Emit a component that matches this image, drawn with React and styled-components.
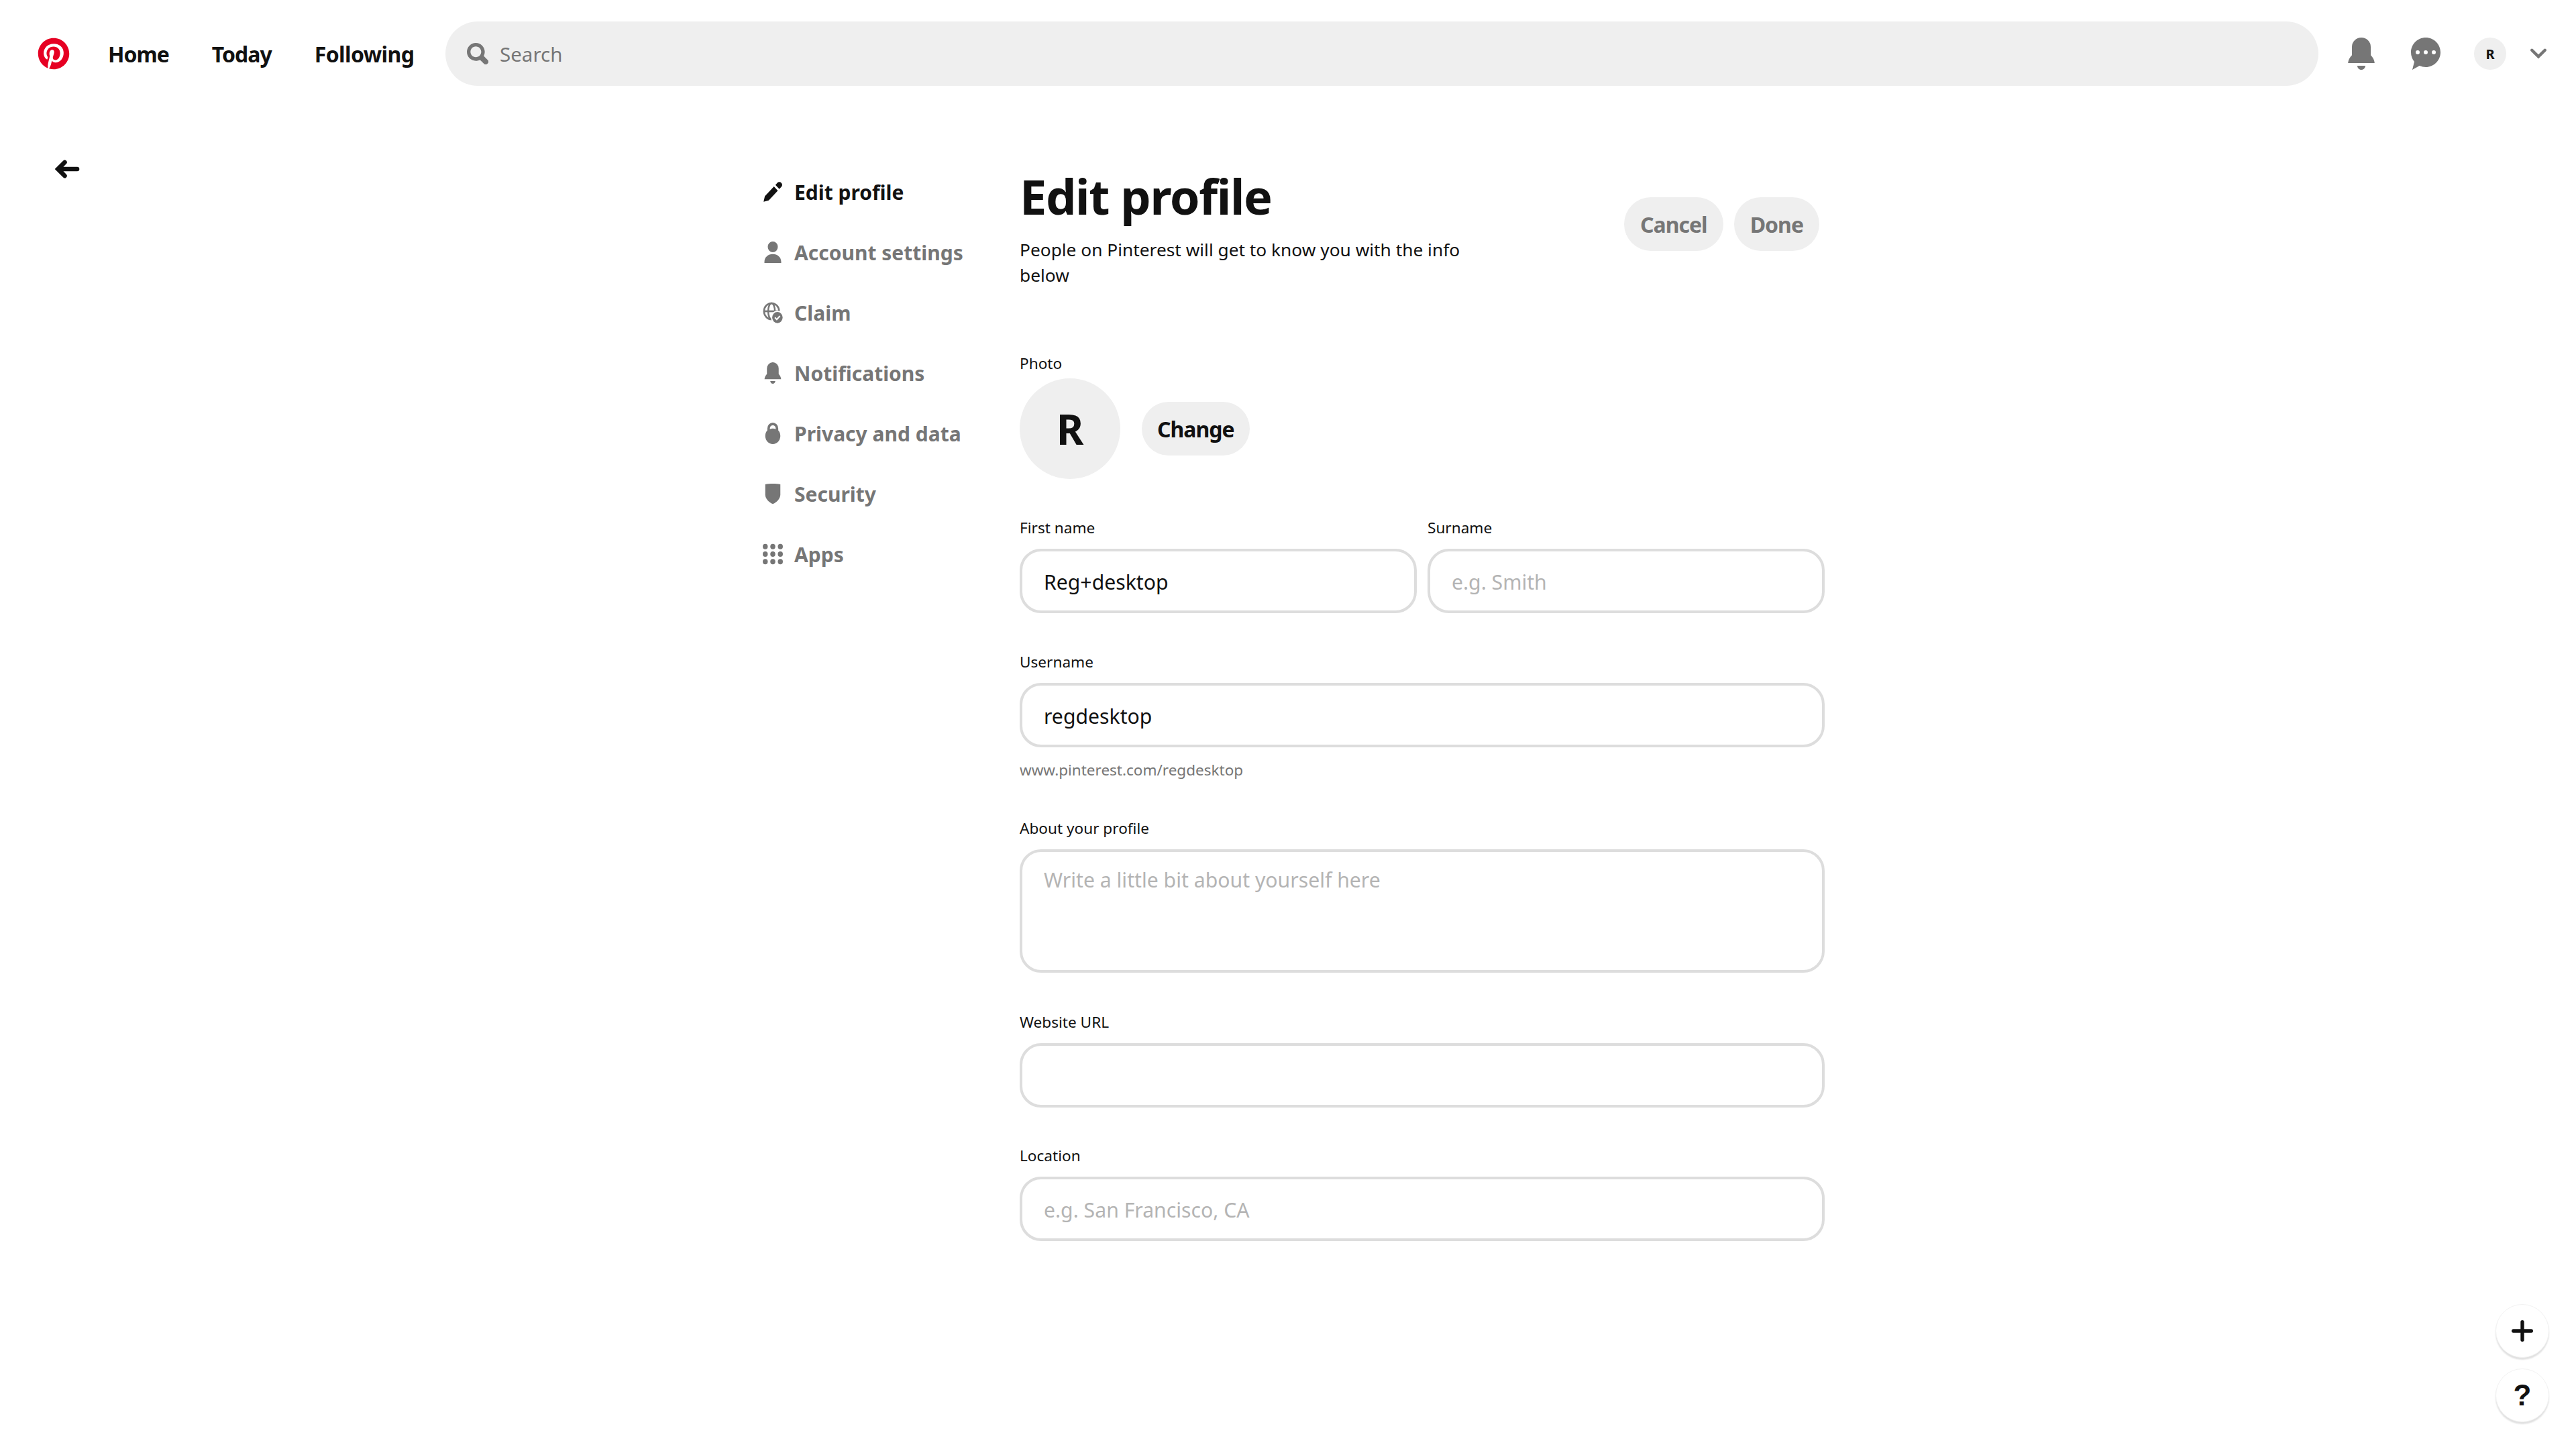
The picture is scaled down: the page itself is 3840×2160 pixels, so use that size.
import React from "react";
import styled, { createGlobalStyle } from "styled-components";
import { FaPinterest } from "react-icons/fa";

const Global = createGlobalStyle`
  html, body { margin: 0; padding: 0; background: #fff; }
  * { box-sizing: border-box; }
  body { font-family: "Noto Sans", "Open Sans", "Liberation Sans", sans-serif; color: #111; }
`;

const Page = styled.div`
  position: relative;
  width: 3840px;
  height: 2160px;
  overflow: hidden;
  background: #fff;
`;
const Header = styled.header`
  height: 160px;
  padding: 32px 44px 32px 56px;
  display: flex;
  align-items: center;
`;
const Logo = styled.span`
  display: flex;
  color: #e60023;
  margin-right: 57px;
  font-size: 48px;
`;
const Nav = styled.nav`
  width: 503px;
  flex: none;
  display: flex;
  align-items: center;
`;
const NavLink = styled.a`
  font-size: 32px;
  font-weight: 700;
  color: #111;
  margin-right: ${(p) => p.$gap}px;
  letter-spacing: ${(p) => p.$ls ?? -1}px;
  white-space: nowrap;
`;
const SearchBar = styled.div`
  width: 2792px;
  flex: none;
  height: 96px;
  border-radius: 48px;
  background: #efefef;
  display: flex;
  align-items: center;
  padding-left: 32px;
  gap: 17px;
  color: #767676;
  font-size: 29.5px;
`;
const TopIcons = styled.div`
  display: flex;
  align-items: center;
  margin-left: 40px;
`;
const TopIcon = styled.svg`
  display: block;
  fill: ${(p) => p.$color || "#767676"};
  margin-right: ${(p) => p.$mr || 0}px;
`;
const MiniAvatar = styled.div`
  width: 48px;
  height: 48px;
  border-radius: 50%;
  background: #efefef;
  font-size: 20px;
  font-weight: 700;
  display: flex;
  align-items: center;
  justify-content: center;
  margin-right: 36px;
`;
const Main = styled.main`
  display: grid;
  grid-template-columns: 1137px 383px 1200px;
`;
const BackCol = styled.div`
  padding: 72px 0 0 80px;
`;
const SideNav = styled.nav`
  padding-top: 81px;
  display: flex;
  flex-direction: column;
`;
const SideItem = styled.a`
  height: 90px;
  display: flex;
  align-items: center;
  gap: 17px;
  font-size: 30px;
  font-weight: 700;
  color: ${(p) => (p.$active ? "#111" : "#767676")};
  white-space: nowrap;
`;
const SideSvg = styled.svg`
  width: 30px;
  height: 32px;
  flex: none;
  fill: currentColor;
`;
const Form = styled.section`
  display: flex;
  flex-direction: column;
`;
const TitleRow = styled.div`
  display: flex;
  justify-content: space-between;
  height: 254px;
  padding-top: 88px;
  padding-right: 8px;
`;
const TitleBlock = styled.div`
  width: 700px;
`;
const Title = styled.h1`
  margin: 0 0 17px;
  font-size: 72px;
  line-height: 88px;
  font-weight: 700;
  letter-spacing: -1.4px;
  color: #111;
`;
const Subtitle = styled.p`
  margin: 0;
  font-size: 26.3px;
  line-height: 38px;
  color: #111;
`;
const Actions = styled.div`
  display: flex;
  gap: 16px;
  padding-top: 46px;
`;
const Pill = styled.button`
  height: 80px;
  padding: 0 ${(p) => p.$pad || 24}px;
  border: none;
  border-radius: 40px;
  background: #efefef;
  font: 700 32px "Noto Sans", sans-serif;
  letter-spacing: -1px;
  color: ${(p) => (p.$muted ? "#767676" : "#111")};
`;
const Label = styled.label`
  display: block;
  font-size: 22.6px;
  line-height: 30px;
  color: #111;
  margin-bottom: ${(p) => p.$mb ?? 16}px;
`;
const PhotoBlock = styled.div`
  margin-top: 113px;
  margin-bottom: 58px;
`;
const PhotoRow = styled.div`
  display: flex;
  align-items: center;
  gap: 32px;
`;
const BigAvatar = styled.div`
  width: 150px;
  height: 150px;
  border-radius: 50%;
  background: #efefef;
  display: flex;
  align-items: center;
  justify-content: center;
  font-size: 62px;
  font-weight: 700;
`;
const NameRow = styled.div`
  display: grid;
  grid-template-columns: 592px 592px;
  gap: 16px;
`;
const Field = styled.div`
  margin-bottom: ${(p) => p.$mb ?? 58}px;
`;
const Input = styled.input`
  display: block;
  width: 100%;
  height: 96px;
  border: 4px solid #ddd;
  border-radius: 32px;
  padding: 2px 32px 0;
  font: 400 30.2px "Noto Sans", sans-serif;
  color: #111;
  background: #fff;
  outline: none;
  &::placeholder { color: #b4b4b4; opacity: 1; }
`;
const TextArea = styled.textarea`
  display: block;
  width: 100%;
  height: 184px;
  border: 4px solid #ddd;
  border-radius: 32px;
  padding: 21px 32px;
  font: 400 30.2px "Noto Sans", sans-serif;
  resize: none;
  outline: none;
  &::placeholder { color: #b4b4b4; opacity: 1; }
`;
const Hint = styled.div`
  font-size: 22.5px;
  line-height: 32px;
  color: #767676;
  margin-top: 18px;
`;
const Fab = styled.button`
  position: absolute;
  right: 40px;
  bottom: ${(p) => p.$bottom}px;
  width: 80px;
  height: 80px;
  border: 1px solid #f2f2f2;
  border-radius: 50%;
  background: #fff;
  box-shadow: 0 3px 2px rgba(0, 0, 0, 0.12);
  display: flex;
  align-items: center;
  justify-content: center;
  padding: 0;
  color: #111;
  font: 900 44px "Liberation Sans", sans-serif;
`;

const icons = {
  pencil: <path d="M13.386 6.018l4.596 4.596L7.097 21.499 1 23l1.501-6.097L13.386 6.018zm8.662-4.066a3.248 3.248 0 0 1 0 4.596L19.75 8.848 15.154 4.25l2.298-2.299a3.248 3.248 0 0 1 4.596 0z" />,
  person: <path d="M12 12a6 6 0 1 0 0-12 6 6 0 0 0 0 12zm0 2c-5.500 0-10 3.400-10 8.600V24h20v-1.400C22 17.400 17.500 14 12 14z" />,
  claim: (
    <g>
      <circle cx="10.5" cy="10.5" r="9" fill="none" stroke="currentColor" strokeWidth="2" />
      <ellipse cx="10.5" cy="10.5" rx="4" ry="9" fill="none" stroke="currentColor" strokeWidth="2" />
      <path d="M1.5 10.5h18" fill="none" stroke="currentColor" strokeWidth="2" />
      <circle cx="17.5" cy="17.5" r="7" stroke="#fff" strokeWidth="1.5" />
      <path d="M14.5 17.5l2.2 2.2 3.8-4" fill="none" stroke="#fff" strokeWidth="1.6" />
    </g>
  ),
  bell: <path d="M12 24c-1.660 0-3-1.340-3-3h6c0 1.660-1.340 3-3 3zm7-10.830c1.580 1.520 2.670 3.550 2.920 5.830H2.080C2.330 16.720 3.420 14.690 5 13.170V7a7 7 0 0 1 7-7 7 7 0 0 1 7 7v6.170z" />,
  lock: <path fillRule="evenodd" d="M12 0a6.500 6.500 0 0 1 6.500 6.500v2.200A9 9 0 1 1 5.500 8.700V6.500A6.500 6.500 0 0 1 12 0zm0 3a3.500 3.500 0 0 0-3.500 3.500v.8a9 9 0 0 1 7 0v-.8A3.500 3.500 0 0 0 12 3z" />,
  shield: <path d="M3 1.500C8 .5 16 .5 21 1.500V13c0 4.500-4 8.500-9 10.500C7 21.500 3 17.500 3 13z" />,
  apps: (
    <g>
      {[3, 12, 21].flatMap((x) =>
        [3.5, 12, 20.5].map((y) => <circle key={`${x}-${y}`} cx={x} cy={y} r="3" />)
      )}
    </g>
  ),
};

const navItems = [
  ["pencil", "Edit profile", true],
  ["person", "Account settings"],
  ["claim", "Claim"],
  ["bell", "Notifications"],
  ["lock", "Privacy and data"],
  ["shield", "Security"],
  ["apps", "Apps"],
];

export default function App() {
  return (
    <Page>
      <Global />
      <Header>
        <Logo><FaPinterest /></Logo>
        <Nav>
          <NavLink $gap={64}>Home</NavLink>
          <NavLink $gap={64}>Today</NavLink>
          <NavLink $gap={0} $ls={-0.6}>Following</NavLink>
        </Nav>
        <SearchBar>
          <TopIcon width="32" height="32" viewBox="0 0 24 24">
            <path d="M10 16c-3.310 0-6-2.690-6-6s2.690-6 6-6 6 2.690 6 6-2.690 6-6 6m13.120 2.880l-4.260-4.260A9.842 9.842 0 0 0 20 10c0-5.520-4.480-10-10-10S0 4.480 0 10s4.480 10 10 10c1.670 0 3.240-.41 4.620-1.140l4.260 4.260a3 3 0 0 0 4.240 0 3 3 0 0 0 0-4.240" />
          </TopIcon>
          Search
        </SearchBar>
        <TopIcons>
          <TopIcon width="48" height="48" viewBox="0 0 24 24" $mr={48}>
            <path d="M12 24c-1.660 0-3-1.340-3-3h6c0 1.660-1.340 3-3 3zm7-10.830c1.580 1.520 2.670 3.550 2.920 5.830H2.080C2.330 16.720 3.420 14.690 5 13.170V7a7 7 0 0 1 7-7 7 7 0 0 1 7 7v6.170z" />
          </TopIcon>
          <TopIcon width="48" height="48" viewBox="0 0 24 24" $mr={48}>
            <path d="M18 12.500a1.500 1.500 0 1 1 .001-3.001A1.500 1.500 0 0 1 18 12.500m-6 0a1.500 1.500 0 1 1 .001-3.001A1.500 1.500 0 0 1 12 12.500m-6 0a1.500 1.500 0 1 1 .001-3.001A1.500 1.500 0 0 1 6 12.500M12 0C5.925 0 1 4.925 1 11c0 2.653.94 5.086 2.504 6.986L2 24l5.336-3.049A10.930 10.930 0 0 0 12 22c6.075 0 11-4.925 11-11S18.075 0 12 0" />
          </TopIcon>
          <MiniAvatar>R</MiniAvatar>
          <TopIcon width="24" height="24" viewBox="0 0 24 24">
            <path d="M12 19.500.66 8.290c-.88-.86-.88-2.270 0-3.140.88-.87 2.300-.87 3.180 0L12 13.210l8.160-8.060c.88-.87 2.300-.87 3.180 0 .88.87.88 2.280 0 3.140z" />
          </TopIcon>
        </TopIcons>
      </Header>
      <Main>
        <BackCol>
          <TopIcon width="40" height="40" viewBox="0 0 24 24" $color="#111">
            <path d="M8.415 4.586a2 2 0 1 1 2.828 2.828L8.657 10H21a2 2 0 0 1 0 4H8.657l2.586 2.586a2 2 0 1 1-2.828 2.828L1 12l7.415-7.414z" />
          </TopIcon>
        </BackCol>
        <SideNav>
          {navItems.map(([icon, label, active]) => (
            <SideItem key={label} $active={active}>
              <SideSvg viewBox="0 0 24 24" preserveAspectRatio="none">{icons[icon]}</SideSvg>
              {label}
            </SideItem>
          ))}
        </SideNav>
        <Form>
          <TitleRow>
            <TitleBlock>
              <Title>Edit profile</Title>
              <Subtitle>People on Pinterest will get to know you with the info below</Subtitle>
            </TitleBlock>
            <Actions>
              <Pill $muted>Cancel</Pill>
              <Pill $muted>Done</Pill>
            </Actions>
          </TitleRow>
          <PhotoBlock>
            <Label $mb={7}>Photo</Label>
            <PhotoRow>
              <BigAvatar>R</BigAvatar>
              <Pill $pad={23}>Change</Pill>
            </PhotoRow>
          </PhotoBlock>
          <NameRow>
            <Field>
              <Label>First name</Label>
              <Input defaultValue="Reg+desktop" />
            </Field>
            <Field>
              <Label>Surname</Label>
              <Input placeholder="e.g. Smith" />
            </Field>
          </NameRow>
          <Field $mb={56}>
            <Label>Username</Label>
            <Input defaultValue="regdesktop" />
            <Hint>www.pinterest.com/regdesktop</Hint>
          </Field>
          <Field $mb={59}>
            <Label>About your profile</Label>
            <TextArea placeholder="Write a little bit about yourself here" />
          </Field>
          <Field $mb={57}>
            <Label>Website URL</Label>
            <Input />
          </Field>
          <Field>
            <Label>Location</Label>
            <Input placeholder="e.g. San Francisco, CA" />
          </Field>
        </Form>
      </Main>
      <Fab $bottom={136} aria-label="Create">
        <TopIcon width="32" height="32" viewBox="0 0 24 24" $color="#111">
          <path d="M22 10h-8V2a2 2 0 0 0-4 0v8H2a2 2 0 0 0 0 4h8v8a2 2 0 0 0 4 0v-8h8a2 2 0 0 0 0-4" />
        </TopIcon>
      </Fab>
      <Fab $bottom={40}>?</Fab>
    </Page>
  );
}
